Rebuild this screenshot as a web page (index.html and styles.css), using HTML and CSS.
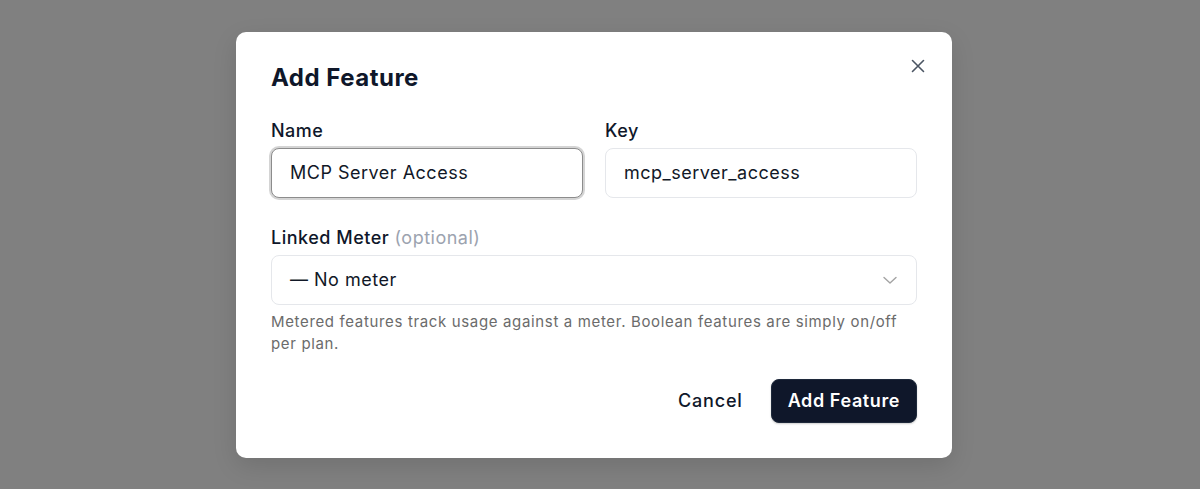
FILE: index.html
```html
<!DOCTYPE html>
<html lang="en">
<head>
<meta charset="utf-8">
<title>Add Feature</title>
<link rel="stylesheet" href="styles.css">
</head>
<body>
<div class="overlay">
  <div class="dialog">
    <button class="close" aria-label="Close">
      <svg width="16" height="16" viewBox="0 0 16 16" fill="none" stroke="currentColor" stroke-width="1.6" stroke-linecap="round"><path d="M2.5 2.5l11 11M13.5 2.5l-11 11"/></svg>
    </button>
    <h2 class="title">Add Feature</h2>
    <div class="row">
      <div class="field">
        <label class="label">Name</label>
        <div class="input focused">MCP Server Access</div>
      </div>
      <div class="field">
        <label class="label">Key</label>
        <div class="input">mcp_server_access</div>
      </div>
    </div>
    <div class="field meter">
      <label class="label">Linked Meter <span class="opt">(optional)</span></label>
      <div class="input select">
        <span>— No meter</span>
        <svg class="chev" width="14" height="14" viewBox="0 0 14 14" fill="none" stroke="currentColor" stroke-width="1.4" stroke-linecap="round" stroke-linejoin="round"><path d="M1 4.5l6 5.5 6-5.5"/></svg>
      </div>
      <p class="help">Metered features track usage against a meter. Boolean features are simply on/off per plan.</p>
    </div>
    <div class="actions">
      <button class="btn ghost">Cancel</button>
      <button class="btn primary">Add Feature</button>
    </div>
  </div>
</div>
</body>
</html>
```
FILE: styles.css
```css
* { box-sizing: border-box; }
html, body { margin: 0; padding: 0; }
body {
  background: #808080;
  font-family: Inter, "Noto Sans", sans-serif;
  color: #0f172a;
}
.overlay {
  height: 489px;
  display: flex;
  align-items: center;
  justify-content: center;
  padding-right: 12px;
}
.dialog {
  position: relative;
  width: 716px;
  background: #fff;
  border-radius: 10px;
  padding: 30px 35px 35px 35px;
  box-shadow: 0 8px 24px rgba(0,0,0,0.12);
}
.close {
  position: absolute;
  top: 22px;
  right: 22px;
  width: 24px;
  height: 24px;
  border: 0;
  background: transparent;
  padding: 0;
  color: #4b5563;
  display: flex;
  align-items: center;
  justify-content: center;
}
.title {
  margin: 0;
  font-size: 24px;
  line-height: 32px;
  font-weight: 700;
  letter-spacing: 0.5px;
}
.row {
  display: grid;
  grid-template-columns: 1fr 1fr;
  gap: 22px;
  margin-top: 25px;
}
.field { display: flex; flex-direction: column; }
.label {
  font-size: 18px;
  line-height: 24px;
  font-weight: 500;
  letter-spacing: 0.5px;
  margin-bottom: 5px;
  color: #0f172a;
}
.opt { color: #9ca3af; font-weight: 400; }
.input {
  height: 50px;
  border: 1px solid #e5e7eb;
  border-radius: 8px;
  padding: 0 18px;
  display: flex;
  align-items: center;
  font-size: 18px;
  letter-spacing: 0.5px;
  color: #111827;
  background: #fff;
}
.input.focused {
  border-color: #8c8c8c;
  box-shadow: 0 0 0 2px #d4d4d4;
}
.meter { margin-top: 28px; }
.select { justify-content: space-between; }
.chev { color: #a3a3a3; margin-right: 1px; }
.help {
  margin: 6px 0 0 0;
  font-size: 15px;
  line-height: 22.5px;
  letter-spacing: 0.65px;
  color: #6b6b6b;
}
.actions {
  display: flex;
  justify-content: flex-end;
  align-items: center;
  gap: 12px;
  margin-top: 23px;
}
.btn {
  font-family: inherit;
  font-size: 18px;
  font-weight: 500;
  height: 44px;
  border-radius: 8px;
  padding: 0 16px;
  letter-spacing: 0.8px;
  cursor: pointer;
}
.ghost {
  background: transparent;
  border: 0;
  color: #0f172a;
}
.primary {
  background: #0f172a;
  border: 1px solid #1e293b;
  color: #fff;
  font-weight: 600;
  padding: 0 16px;
  letter-spacing: 0.6px;
  box-shadow: 0 1px 2px rgba(0,0,0,0.2);
}
```
